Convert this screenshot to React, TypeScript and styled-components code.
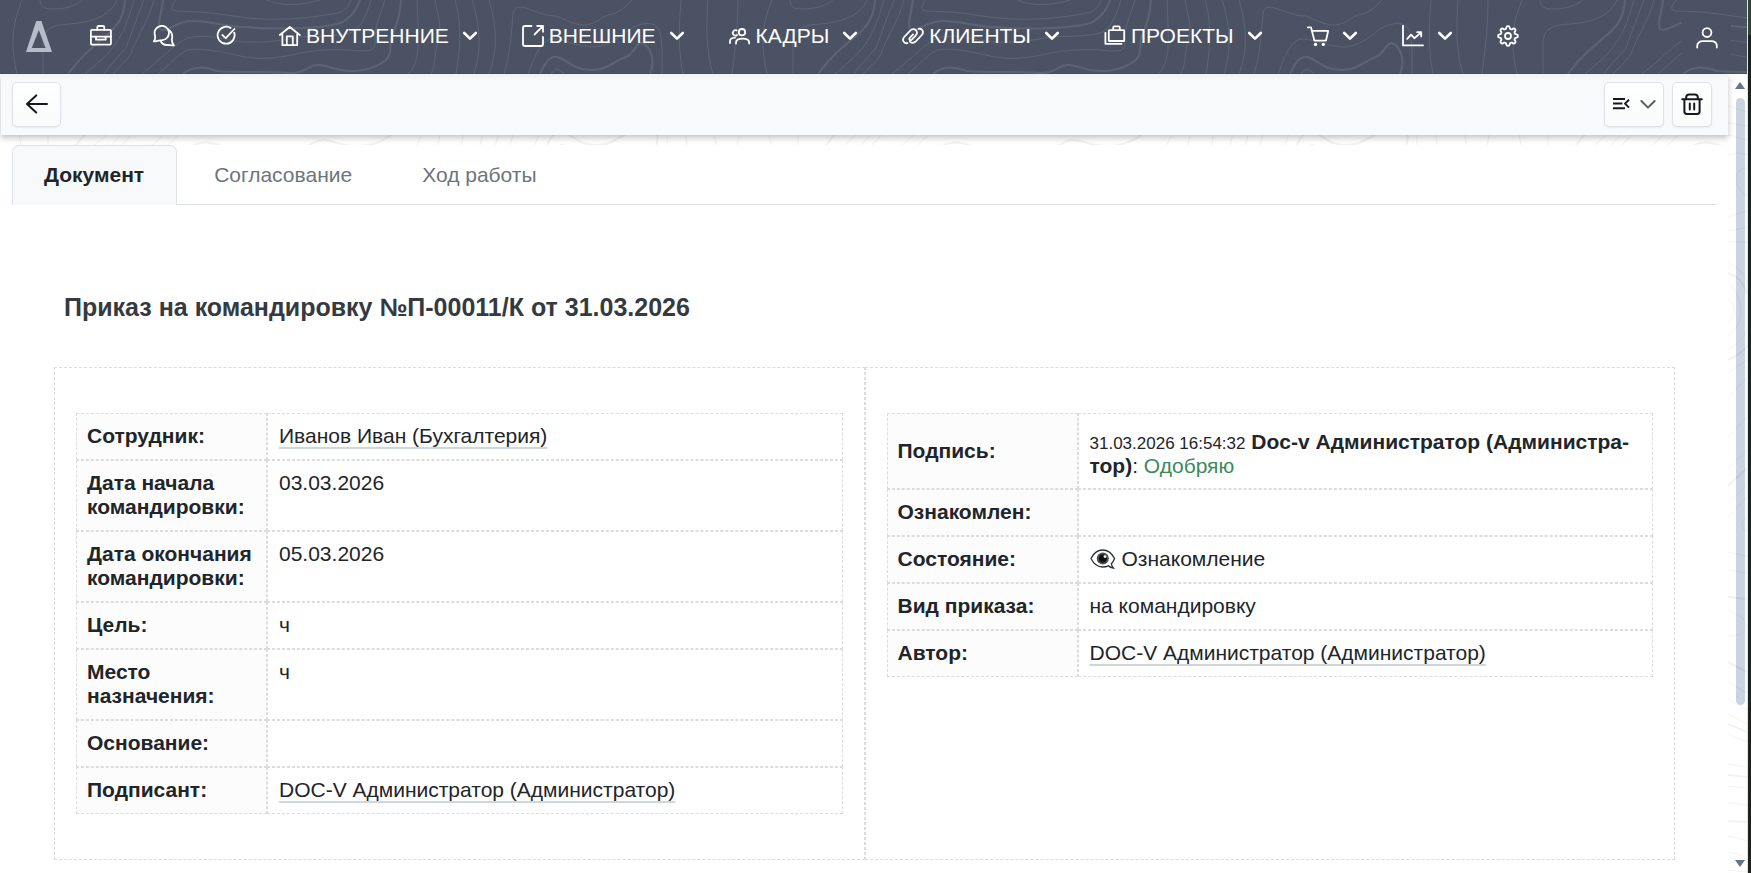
import React from 'react';
import styled, { createGlobalStyle } from 'styled-components';

const Global = createGlobalStyle`
  *, *::before, *::after { box-sizing: border-box; }
  body {
    margin: 0;
    background: #fff;
    color: #212529;
    font: 21px/24px "Liberation Sans", Arial, sans-serif;
  }
`;

/* ---------- frame ---------- */

const Screen = styled.div`
  display: flex;
  min-height: 100vh;
`;

const AppColumn = styled.div`
  display: flex;
  flex: 1;
  flex-direction: column;
  min-width: 0;
`;

const DesktopEdge = styled.div`
  flex: none;
  width: 4px;
  border-left: 1px solid #dfe3e8;
  background: linear-gradient(#34452f 0 35px, #1a241d 35px 100%);
`;

const Body = styled.div`
  display: flex;
  flex: 1;
  min-height: 0;
`;

const Page = styled.div`
  flex: 1;
  min-width: 0;
  padding-left: 1px;
`;

/* ---------- header ---------- */

const Header = styled.header`
  position: relative;
  display: flex;
  align-items: center;
  justify-content: space-between;
  height: 74px;
  padding: 0 16px 0 26px;
  background: #4a5263;
  color: #fff;
`;

const Backdrop = styled.svg<{ $tone: string }>`
  position: absolute;
  inset: 0;
  width: 100%;
  height: 100%;
  color: ${(p) => p.$tone};
  pointer-events: none;
`;

const Nav = styled.nav`
  position: relative;
  display: flex;
  align-items: center;
  gap: 38px;
  padding-bottom: 2px;
`;

const Brand = styled.a`
  display: flex;
  color: #b6bdca;
`;

const NavGroup = styled.ul`
  display: flex;
  align-items: center;
  gap: 41px;
  margin: 0;
  padding: 0;
  list-style: none;
`;

const NavButton = styled.button`
  display: flex;
  align-items: center;
  padding: 0;
  border: 0;
  background: none;
  color: inherit;
  font: inherit;
  white-space: nowrap;
  cursor: pointer;
`;

const NavLabel = styled.span`
  margin-left: 5px;
`;

const Caret = styled.svg`
  width: 18px;
  height: 18px;
  margin: 0 2px 0 12px;
`;

const UserButton = styled(NavButton)`
  position: relative;
  justify-content: center;
  width: 49px;
  height: 40px;
  padding-top: 2px;
  background: #4a5263;
`;

const Icon = styled.svg`
  flex: none;
  width: 22px;
  height: 22px;
  fill: none;
  stroke: currentColor;
  stroke-width: 1.8;
  stroke-linecap: round;
  stroke-linejoin: round;
`;

/* ---------- toolbar ---------- */

const Toolbar = styled.div`
  position: relative;
  z-index: 1;
  display: flex;
  align-items: center;
  justify-content: space-between;
  height: 61px;
  padding: 0 16px 1px 11px;
  background: linear-gradient(#eff1f3, #f8f9fb 6px);
  box-shadow: 0 3px 6px rgba(0, 0, 0, 0.24);
`;

const ToolGroup = styled.div`
  display: flex;
  gap: 8px;
`;

const ToolButton = styled.button<{ $width: number }>`
  display: flex;
  align-items: center;
  justify-content: center;
  gap: 10px;
  width: ${(p) => p.$width}px;
  height: 45px;
  padding: 0 0 1px;
  border: 1px solid #dee2e6;
  border-radius: 5px;
  background: linear-gradient(#fff, #f9fafa);
  box-shadow: 0 1px 2px rgba(0, 0, 0, 0.06);
  color: #16191c;
  cursor: pointer;

  svg {
    stroke-width: 2;
  }
`;

const MenuGlyph = styled(Icon)`
  width: 18px;
`;

const ThinCaret = styled(Icon)`
  width: 16px;
  color: #5c5f63;
`;

/* ---------- tabs ---------- */

const PatternStrip = styled.div`
  position: relative;
  height: 10px;
  overflow: hidden;
`;

const Tabs = styled.div`
  display: flex;
  height: 60px;
  margin: 0 11px;
  border-bottom: 1px solid #dee2e6;
`;

const Tab = styled.button<{ $active?: boolean }>`
  height: 60px;
  padding: 0 32px 2px ${(p) => (p.$active ? 31 : 36)}px;
  border: 1px solid ${(p) => (p.$active ? '#dee2e6' : 'transparent')};
  border-bottom: 0;
  border-radius: 7px 7px 0 0;
  background: ${(p) => (p.$active ? '#f8f9fb' : 'transparent')};
  color: ${(p) => (p.$active ? '#212529' : '#6c757d')};
  font: inherit;
  font-weight: ${(p) => (p.$active ? 700 : 400)};
  cursor: pointer;
`;

/* ---------- document ---------- */

const Doc = styled.main`
  padding: 87px 53px 13px;
`;

const Title = styled.h1`
  margin: 0 0 45px;
  padding-left: 10px;
  color: #343a40;
  font-size: 25px;
  line-height: 30px;
`;

const Panels = styled.div`
  display: grid;
  grid-template-columns: 1fr 1fr;
`;

const Panel = styled.section`
  min-width: 0;
  padding: 45px 21px;
  border: 1px dashed #dcdcdc;
`;

const Fields = styled.table`
  width: 100%;
  border-collapse: separate;
  border-spacing: 0;
  table-layout: fixed;
`;

const FieldName = styled.th`
  width: 191px;
  padding: 10px 10px 11px;
  border: 1px dashed #dcdcdc;
  background: #fcfcfc;
  text-align: left;
  vertical-align: middle;
`;

const FieldValue = styled.td<{ $note?: boolean }>`
  padding: ${(p) => (p.$note ? '16px 11px 10px' : '10px 11px 11px')};
  border: 1px dashed #dcdcdc;
  vertical-align: top;
`;

const PersonLink = styled.a`
  color: inherit;
  text-decoration: underline 2px #d0d5dd;
  text-underline-offset: 4px;
`;

const Stamp = styled.time`
  font-size: 17px;
  line-height: 17px;
`;

const Approved = styled.span`
  color: #3a8a5c;
`;

const EyeGlyph = styled.svg`
  width: 26px;
  height: 20px;
  margin-right: 6px;
  vertical-align: -3px;
`;

/* ---------- scroll rail ---------- */

const Rail = styled.div`
  position: relative;
  display: flex;
  flex: none;
  flex-direction: column;
  align-items: center;
  width: 19px;
  padding: 8px 0 6px 5px;
  overflow: hidden;
`;

const RailTrack = styled.div`
  flex: 1;
  width: 9px;
  margin: 9px 0;
`;

const RailThumb = styled.div`
  height: 80.6%;
  border-radius: 5px;
  background: rgba(160, 178, 202, 0.56);
`;

const RailArrow = styled.svg`
  width: 10px;
  height: 7px;
  fill: #64748b;
`;

/* ---------- drawings ---------- */

const thin = [
  'M22 0C14 20 9 40 17 74',
  'M40 -1C40 6 43 9 52 9C66 9 76 6 84 -1',
  'M117 0C110 15 95 22 70 24C50 25 43 30 43 45V74',
  'M134 0C128 20 124 32 114 46C105 58 95 65 85 74',
  'M144 0C136 20 132 32 126 48C118 58 110 64 104 74',
  'M154 0C148 22 136 38 131 54C124 64 118 68 113 74',
  'M176 0C172 6 169 10 176 11L200 12C225 14 240 18 262 19C300 20 320 16 338 13C346 11 350 4 351 0',
  'M371 0C366 16 360 33 345 34C330 37 310 36 300 37C280 41 255 44 235 41C220 38 205 34 187 38C172 46 158 62 142 74',
  'M385 0C380 16 374 28 375 40C376 52 370 52 350 50C330 49 318 50 300 53C280 58 262 60 245 57C225 53 205 47 187 50C176 56 168 66 158 74',
  'M417 0C418 20 419 50 417 56C415 66 412 70 408 74',
  'M435 0C437 14 443 24 438 42C434 54 436 64 431 74',
  'M455 0C460 16 462 40 456 74',
  'M472 0C480 24 482 48 474 74',
  'M489 0C497 26 498 50 489 74',
  'M504 74C510 56 511 36 513 14C514 6 520 6 528 9C540 13 546 16 556 16C566 20 574 25 585 25C596 24 600 18 608 15C618 14 624 8 632 0',
  'M528 74C534 60 538 44 550 39C562 38 578 47 595 47C612 45 620 36 630 29C644 21 655 22 659 30C663 42 662 60 662 74',
  'M551 74C555 68 559 68 564 74',
  'M681 0C679 26 678 50 683 74',
  'M708 0C706 26 706 52 713 74',
  'M738 0C738 26 735 52 732 74',
  'M267 0C280 6 300 6 320 0',
];

const thick = [
  'M125 0C124 14 120 24 108 34C92 48 82 55 68 74',
  'M163 0C161 15 157 25 160 29C166 33 176 22 190 21C210 20 225 27 245 27C275 30 335 29 346 20C354 14 357 7 360 0',
  'M401 0C400 18 396 28 391 38C389 50 394 56 380 64C366 72 352 72 340 70C324 66 318 62 308 68C303 72 298 73 290 73C260 71 240 73 217 71C204 67 194 65 183 74',
  'M540 74C546 60 552 54 560 58C570 62 574 70 592 70C608 70 616 60 628 56C636 50 636 43 642 43C650 46 656 60 650 74',
];

const railThin = [
  'M0 6L19 13', 'M0 32L19 38', 'M0 49L19 52', 'M0 61L19 66', 'M0 81Q10 77 19 81',
  'M19 94C10 94 8 100 8 106C10 114 13 118 19 122', 'M0 143L19 137', 'M0 157L19 153', 'M0 168H19',
  'M0 188Q14 194 19 208', 'M0 209C10 217 13 228 13 238C12 252 6 258 0 261',
  'M0 225C9 232 9 244 0 248', 'M0 276Q14 268 19 256', 'M0 299L19 286', 'M0 323L19 304',
  'M0 363L19 343', 'M0 394L19 376',
  'M0 429L19 411', 'M0 443L19 423', 'M19 443Q9 451 19 458', 'M0 478L19 482', 'M0 496L19 499',
  'M0 536C12 541 17 544 18 552C17 560 10 562 0 562', 'M0 608L19 619', 'M0 626L19 636',
  'M0 640L19 650', 'M0 660L19 668', 'M0 690L19 693', 'M0 712L19 714', 'M0 729L19 731',
  'M0 762Q10 763 19 767', 'M0 778Q10 779 19 784', 'M0 796L19 798',
];

const railThick = [
  'M0 199Q15 204 19 220', 'M0 286Q12 281 19 272', 'M0 412L19 394', 'M0 523L19 525',
  'M0 588L19 598', 'M0 650L19 658', 'M0 701L19 703', 'M0 747L19 748',
];

function Contours({ id, tone, dx = 0, dy = 0 }: { id: string; tone: string; dx?: number; dy?: number }) {
  return (
    <Backdrop $tone={tone} aria-hidden="true">
      <defs>
        <pattern id={id} width="750" height="74" patternUnits="userSpaceOnUse" patternTransform={`translate(${dx} ${dy})`}>
          <g fill="none" stroke="currentColor">
            <path d={thin.join('')} />
            <path d={thick.join('')} strokeWidth="2" />
          </g>
        </pattern>
      </defs>
      <rect width="100%" height="100%" fill={`url(#${id})`} />
    </Backdrop>
  );
}

const gearPath =
  Array.from({ length: 96 }, (_, i) => {
    const a = (i / 96) * Math.PI * 2;
    const r = 8.6 + 1.3 * Math.tanh(2 * Math.cos(8 * a));
    return `${i ? 'L' : 'M'}${(11 + r * Math.sin(a)).toFixed(2)} ${(11 - r * Math.cos(a)).toFixed(2)}`;
  }).join('') + 'Z';

const icons: Record<string, React.ReactNode> = {
  briefcase: (
    <>
      <rect x="0.9" y="4.8" width="20" height="14.8" rx="1" />
      <path d="M7.3 4.8V2.4Q7.3 1 8.7 1h4.2q1.4 0 1.4 1.4v2.4M.9 11.6h20M6 12v2.7h9.6V12" />
    </>
  ),
  chat: (
    <>
      <path d="M.9 16.4C2.2 14.8 2.4 13 2 10.5A7.2 7.2 0 1 1 9.2 15.2C5.6 15.2 3.8 16.4.9 16.4Z" />
      <path d="M16.3 5.2C19 7.5 19.9 10.5 18.8 14.6C18.8 17.2 19.3 18.8 20.9 20.4C18 20.6 16.8 20 14 20C10.8 20 8.6 18.6 7.6 15.6" />
    </>
  ),
  check: <path d="M18.2 7.6A8.5 8.5 0 1 1 14.6 3M6.3 10L9.8 13.2L18.4 4" />,
  home: <path d="M.8 10L10.8 2L20.8 10M3.4 9V20.2H18.2V9M7.8 20V11.4H13.8V20" />,
  external: <path d="M9.5 1H3Q1 1 1 3V19Q1 21 3 21H19Q21 21 21 19V12M12.5 9.5L20.6 1.4M15.2 1H21V6.8" />,
  people: (
    <>
      <circle cx="13" cy="7.2" r="3.2" />
      <path d="M7.6 5.4A2.7 2.7 0 1 0 8.2 10M7 18.6V17.8C7 14.6 10 13.6 13.6 13.6S20.2 14.6 20.2 17.8V18.6M1 18V16.2C1 13.8 3 12.8 6 12.6" />
    </>
  ),
  link: (
    <>
      <path d="M5.4 18.2C1.6 18.8-.2 14.8 2.2 12L8.2 5.6C10.2 3.6 13 3.8 14.2 5.6S14.8 9.4 13.6 10.6L9.8 14.6C8.2 16 6.6 14.4 7.8 12.8L11 9.4" />
      <path d="M16.6 3.8C20.4 3.2 22.2 7.2 19.8 10L13.8 16.4C11.8 18.4 9 18.2 7.8 16.4" />
    </>
  ),
  projects: (
    <>
      <rect x="4.8" y="5.2" width="15.4" height="10.8" rx="0.6" />
      <path d="M1.4 7.8V18.8H17.6M9.2 5.2V2.6Q9.2 1.4 10.4 1.4h4.2q1.2 0 1.2 1.2v2.6" />
    </>
  ),
  cart: (
    <>
      <path d="M.8 2.4H4L7.4 15.6H19L21.2 5.8H5" />
      <path d="M8.5 19.4h.1M16.3 19.4h.1" strokeWidth="3.4" />
    </>
  ),
  chart: <path d="M1 .8V20.4H21M5.2 13.8L9 9.6L12.4 13.2L18.8 7.6M15.2 7.2H19.2V11.4" />,
  gear: (
    <>
      <path d={gearPath} />
      <circle cx="11" cy="11" r="3" />
    </>
  ),
  user: (
    <>
      <circle cx="11" cy="5.6" r="4.4" />
      <path d="M1.2 20.6V19C1.2 16 3.4 14.2 7 14.2H15C18.6 14.2 20.8 16 20.8 19V20.6" />
    </>
  ),
  back: <path d="M1 11H21M10.2 2.4L1 11L10.2 19.6" />,
  trash: <path d="M1.2 6.2H20.8M5.2 6V4Q5.4 1.4 8 1.4H14Q16.6 1.4 16.8 4V6M3.4 6.4V18.6Q3.4 21 5.8 21H16.2Q18.6 21 18.6 18.6V6.4M8.8 10.6V16.6M13.2 10.6V16.6" />,
};

const Glyph = ({ name }: { name: string }) => (
  <Icon viewBox="0 0 22 22" aria-hidden="true">{icons[name]}</Icon>
);

/* ---------- data ---------- */

const navItems: { icon: string; title: string; label?: string; menu?: boolean }[] = [
  { icon: 'briefcase', title: 'Дела' },
  { icon: 'chat', title: 'Чат' },
  { icon: 'check', title: 'Задачи' },
  { icon: 'home', title: 'Внутренние', label: 'ВНУТРЕННИЕ', menu: true },
  { icon: 'external', title: 'Внешние', label: 'ВНЕШНИЕ', menu: true },
  { icon: 'people', title: 'Кадры', label: 'КАДРЫ', menu: true },
  { icon: 'link', title: 'Клиенты', label: 'КЛИЕНТЫ', menu: true },
  { icon: 'projects', title: 'Проекты', label: 'ПРОЕКТЫ', menu: true },
  { icon: 'cart', title: 'Закупки', menu: true },
  { icon: 'chart', title: 'Отчёты', menu: true },
  { icon: 'gear', title: 'Настройки' },
];

type Field = { name: string; value?: React.ReactNode; note?: boolean };

const tripFields: Field[] = [
  { name: 'Сотрудник:', value: <PersonLink href="#employee">Иванов Иван (Бухгалтерия)</PersonLink> },
  { name: 'Дата начала командировки:', value: '03.03.2026' },
  { name: 'Дата окончания командировки:', value: '05.03.2026' },
  { name: 'Цель:', value: 'ч' },
  { name: 'Место назначения:', value: 'ч' },
  { name: 'Основание:' },
  { name: 'Подписант:', value: <PersonLink href="#signer">DOC-V Администратор (Администратор)</PersonLink> },
];

const stateFields: Field[] = [
  {
    name: 'Подпись:',
    note: true,
    value: (
      <>
        <Stamp>31.03.2026 16:54:32</Stamp> <b>Doc-v Администратор (Администра&shy;тор)</b>: <Approved>Одобряю</Approved>
      </>
    ),
  },
  { name: 'Ознакомлен:' },
  {
    name: 'Состояние:',
    value: (
      <>
        <EyeGlyph viewBox="0 0 26 20" aria-hidden="true">
          <path
            d="M1 9.5C4 3.5 8 1 12.6 1S21.5 3.5 24.6 9.5C23.8 11.6 22.6 13.4 21.4 14.6C21.6 16.4 22.2 17.8 23.4 19C21 18.8 19.4 17.9 18.4 16.8C16.6 17.6 14.8 18 12.6 18C8 18 4 15.5 1 9.5Z"
            fill="#fff"
            stroke="#2b2f33"
            strokeWidth="1.3"
          />
          <circle cx="12.8" cy="9.4" r="6" fill="#4a5056" />
          <circle cx="12.8" cy="9.4" r="4" fill="#111" />
          <circle cx="15" cy="7.6" r="1.4" fill="#fff" />
        </EyeGlyph>
        Ознакомление
      </>
    ),
  },
  { name: 'Вид приказа:', value: 'на командировку' },
  { name: 'Автор:', value: <PersonLink href="#author">DOC-V Администратор (Администратор)</PersonLink> },
];

const FieldTable = ({ rows }: { rows: Field[] }) => (
  <Fields>
    <tbody>
      {rows.map((row) => (
        <tr key={row.name}>
          <FieldName scope="row">{row.name}</FieldName>
          <FieldValue $note={row.note}>{row.value}</FieldValue>
        </tr>
      ))}
    </tbody>
  </Fields>
);

export default function App() {
  return (
    <Screen lang="ru">
      <Global />
      <AppColumn>
        <Header>
          <Contours id="contours-dark" tone="rgba(255, 255, 255, 0.1)" />
          <Nav>
            <Brand href="#home" aria-label="На главную">
              <svg width="26" height="31" viewBox="0 0 26 31" fill="currentColor">
                <path fillRule="evenodd" d="M10.2 0H15.4L26 31H0ZM12.8 9L5.8 27H19.6Z" />
              </svg>
            </Brand>
            <NavGroup>
              {navItems.map((item) => (
                <li key={item.icon}>
                  <NavButton type="button" aria-label={item.title}>
                    <Glyph name={item.icon} />
                    {item.label && <NavLabel>{item.label}</NavLabel>}
                    {item.menu && (
                      <Caret viewBox="0 0 18 18" aria-hidden="true">
                        <path d="M3.2 6L9 11.6L14.8 6" fill="none" stroke="currentColor" strokeWidth="2.6" strokeLinecap="round" strokeLinejoin="round" />
                      </Caret>
                    )}
                  </NavButton>
                </li>
              ))}
            </NavGroup>
          </Nav>
          <UserButton type="button" aria-label="Профиль">
            <Glyph name="user" />
          </UserButton>
        </Header>

        <Body>
          <Page>
            <Toolbar>
              <ToolButton type="button" $width={49} aria-label="Назад">
                <Glyph name="back" />
              </ToolButton>
              <ToolGroup>
                <ToolButton type="button" $width={60} aria-label="Действия">
                  <MenuGlyph viewBox="0 0 18 22" aria-hidden="true">
                    <path d="M1 6H13M1 10.6H10.4M1 15.2H13M17 6.8L13 10.6L17 14.6" strokeLinecap="butt" />
                  </MenuGlyph>
                  <ThinCaret viewBox="0 0 16 22" aria-hidden="true">
                    <path d="M1.4 8L8 14.6L14.6 8" />
                  </ThinCaret>
                </ToolButton>
                <ToolButton type="button" $width={40} aria-label="Удалить">
                  <Glyph name="trash" />
                </ToolButton>
              </ToolGroup>
            </Toolbar>

            <PatternStrip>
              <Contours id="contours-light" tone="rgba(0, 0, 0, 0.05)" dx={4} dy={-60} />
            </PatternStrip>

            <Tabs role="tablist">
              <Tab type="button" role="tab" aria-selected="true" $active>Документ</Tab>
              <Tab type="button" role="tab" aria-selected="false">Согласование</Tab>
              <Tab type="button" role="tab" aria-selected="false">Ход работы</Tab>
            </Tabs>

            <Doc>
              <Title>Приказ на командировку №П-00011/К от 31.03.2026</Title>
              <Panels>
                <Panel>
                  <FieldTable rows={tripFields} />
                </Panel>
                <Panel>
                  <FieldTable rows={stateFields} />
                </Panel>
              </Panels>
            </Doc>
          </Page>

          <Rail aria-hidden="true">
            <Backdrop $tone="rgba(0, 0, 0, 0.05)" viewBox="0 0 19 800" preserveAspectRatio="xMidYMin slice">
              <g fill="none" stroke="currentColor">
                <path d={railThin.join('')} />
                <path d={railThick.join('')} strokeWidth="2" />
              </g>
            </Backdrop>
            <RailArrow viewBox="0 0 10 7"><path d="M5 0L10 7H0Z" /></RailArrow>
            <RailTrack>
              <RailThumb />
            </RailTrack>
            <RailArrow viewBox="0 0 10 7"><path d="M0 0H10L5 7Z" /></RailArrow>
          </Rail>
        </Body>
      </AppColumn>
      <DesktopEdge />
    </Screen>
  );
}
